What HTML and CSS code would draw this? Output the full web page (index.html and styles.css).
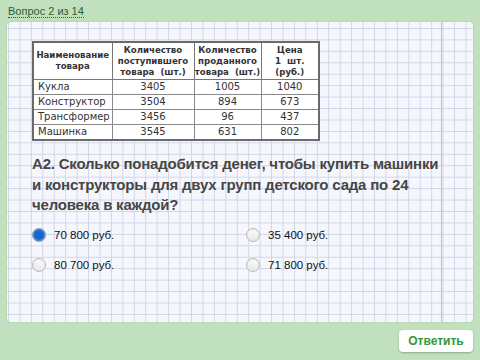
FILE: index.html
```html
<!DOCTYPE html>
<html lang="ru">

<head>
    <meta charset="UTF-8">
    <meta name="viewport" content="width=device-width, initial-scale=1.0">
    <title>Вопрос 2 из 14</title>
    <link rel="stylesheet" href="styles.css">
</head>

<body>
    <!-- шапка с номером вопроса -->
    <div class="top">
        <a class="counter" href="#">Вопрос 2 из 14</a>
    </div>

    <!-- лист в клетку -->
    <div class="paper">
        <table class="goods">
            <colgroup>
                <col class="c1"><col class="c2"><col class="c3"><col class="c4">
            </colgroup>
            <tr>
                <th>Наименование<br>товара</th>
                <th>Количество<br>поступившего<br>товара&nbsp; (шт.)</th>
                <th>Количество<br>проданного<br>товара&nbsp; (шт.)</th>
                <th>Цена<br>1&nbsp; шт.<br>(руб.)</th>
            </tr>
            <tr><td>Кукла</td><td>3405</td><td>1005</td><td>1040</td></tr>
            <tr><td>Конструктор</td><td>3504</td><td>894</td><td>673</td></tr>
            <tr><td>Трансформер</td><td>3456</td><td>96</td><td>437</td></tr>
            <tr><td>Машинка</td><td>3545</td><td>631</td><td>802</td></tr>
        </table>

        <p class="question">A2. Сколько понадобится денег, чтобы купить машинки и конструкторы для двух групп детского сада по 24 человека в каждой?</p>

        <div class="answers">
            <label class="answer"><span class="radio checked"></span>70 800 руб.</label>
            <label class="answer"><span class="radio"></span>35 400 руб.</label>
            <label class="answer"><span class="radio"></span>80 700 руб.</label>
            <label class="answer"><span class="radio"></span>71 800 руб.</label>
        </div>
    </div>

    <div class="bottom">
        <button class="send">Ответить</button>
    </div>
</body>

</html>
```

FILE: styles.css
```css
/* общий фон страницы */
body {
    margin: 0;
    width: 480px;
    height: 360px;
    background-color: #c1e0bd;
    font-family: "Liberation Sans", Arial, sans-serif;
    overflow: hidden;
}

/* шапка */
.top {
    height: 22px;
    padding-left: 8px;
    display: flex;
    align-items: center;
}

.counter {
    font-size: 11px;
    color: #2f5e36;
    text-decoration: none;
    border-bottom: 1px dotted #2f5e36;
    line-height: 12px;
}

/* лист в клетку с красной линией полей */
.paper {
    margin: 0 7px;
    height: 300px;
    box-sizing: border-box;
    padding: 19px 0 0 25px;
    border-radius: 3px;
    box-shadow: 0 0 1px rgba(0, 0, 0, 0.35);
    background-color: #f6f7fc;
    background-image:
        linear-gradient(90deg, transparent 434px, #e3aab8 434px, #e3aab8 435px, transparent 435px),
        linear-gradient(90deg, #cfd5ea 1px, transparent 1px),
        linear-gradient(180deg, #cfd5ea 1px, transparent 1px);
    background-size: 100% 100%, 11.45px 11.45px, 11.45px 11.45px;
    background-position: 0 0, 1px 6px, 1px 6px;
}

/* таблица */
.goods {
    border-collapse: collapse;
    table-layout: fixed;
    width: 286px;
    background: #fff;
    border: 2px solid #6a6a6a;
    font-family: "DejaVu Sans", Verdana, sans-serif;
    font-size: 10px;
    color: #333;
}

.c1 { width: 79px; }
.c2 { width: 82px; }
.c3 { width: 67px; }
.c4 { width: 58px; }

.goods th {
    font-size: 8.6px;
    font-weight: bold;
    line-height: 11px;
    height: 36px;
    padding: 0;
    white-space: nowrap;
    border: 1px solid #777;
    color: #333;
}

.goods td {
    height: 14px;
    padding: 0 4px;
    line-height: 14px;
    text-align: center;
    border: 1px solid #888;
}

.goods td:first-child {
    text-align: left;
}

/* вопрос */
.question {
    margin: 13px 26px 0 0;
    font-size: 15px;
    letter-spacing: -0.2px;
    line-height: 20.5px;
    font-weight: bold;
    color: #464646;
}

/* варианты ответа */
.answers {
    display: grid;
    grid-template-columns: 214px 200px;
    row-gap: 16px;
    margin-top: 12px;
}

.answer {
    display: flex;
    align-items: center;
    gap: 8px;
    font-size: 11.5px;
    color: #111;
    height: 14px;
}

.radio {
    width: 12px;
    height: 12px;
    border-radius: 50%;
    border: 1px solid #bbb;
    background: linear-gradient(#fdfdfd, #e6e6e6);
    box-shadow: inset 0 1px 1px rgba(0, 0, 0, 0.08);
}

.radio.checked {
    background: #1767d2;
    border-color: #9aa4b4;
    box-shadow: inset 0 0 0 1px #5a8fd8;
}

/* нижняя панель с кнопкой */
.bottom {
    display: flex;
    justify-content: flex-end;
    padding: 8px 7px 0 0;
}

.send {
    width: 74px;
    height: 22px;
    background: #fff;
    border: none;
    border-radius: 4px;
    box-shadow: 0 1px 2px rgba(0, 0, 0, 0.25);
    font-family: "Liberation Sans", Arial, sans-serif;
    font-size: 12px;
    font-weight: bold;
    color: #2e9a3c;
}
```
